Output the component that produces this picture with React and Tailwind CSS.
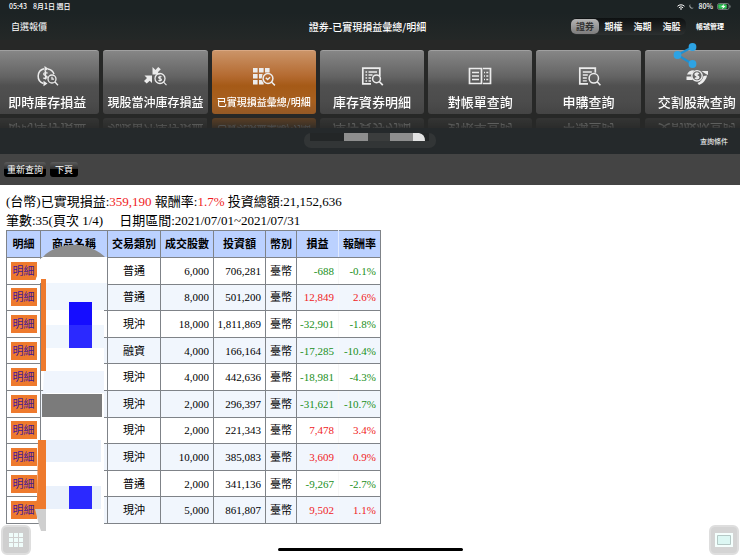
import React, { useState } from "react";
import clsx from "clsx";

const rows = [
  { type: "普通", qty: "6,000", amount: "706,281", pnl: "-688", rate: "-0.1%" },
  { type: "普通", qty: "8,000", amount: "501,200", pnl: "12,849", rate: "2.6%" },
  { type: "現沖", qty: "18,000", amount: "1,811,869", pnl: "-32,901", rate: "-1.8%" },
  { type: "融資", qty: "4,000", amount: "166,164", pnl: "-17,285", rate: "-10.4%" },
  { type: "現沖", qty: "4,000", amount: "442,636", pnl: "-18,981", rate: "-4.3%" },
  { type: "現沖", qty: "2,000", amount: "296,397", pnl: "-31,621", rate: "-10.7%" },
  { type: "現沖", qty: "2,000", amount: "221,343", pnl: "7,478", rate: "3.4%" },
  { type: "現沖", qty: "10,000", amount: "385,083", pnl: "3,609", rate: "0.9%" },
  { type: "普通", qty: "2,000", amount: "341,136", pnl: "-9,267", rate: "-2.7%" },
  { type: "現沖", qty: "5,000", amount: "861,807", pnl: "9,502", rate: "1.1%" },
];

const headers = ["明細", "商品名稱", "交易類別", "成交股數", "投資額", "幣別", "損益", "報酬率"];
const markets = ["證券", "期權", "海期", "海股"];

const iconProps = {
  viewBox: "0 0 24 22",
  fill: "none",
  stroke: "#ececec",
  strokeWidth: 1.5,
  className: "h-[22px] w-6",
  "aria-hidden": true,
};

function InventoryIcon() {
  return (
    <svg {...iconProps}>
      <path d="M9 3.700A7.700 7.700 0 0 0 8.500 18.500M13 4a7.600 7.600 0 0 1 6 5" />
      <path d="M9.500 1 13.500 3.800 9.500 6.500zM8.500 15.800l4 2.800-4 2.700z" fill="#ececec" stroke="none" />
      <path d="M12.500 8.300c-.8-1-3.800-.9-3.800.8 0 1.800 3.500 1.200 3.500 3 0 1.600-2.700 1.700-3.800.6M10.500 6v8.500" strokeWidth="1.300" />
      <circle cx="17" cy="14" r="4" strokeWidth="1.300" />
      <path d="M17 11.800V14.200h2M20 17l3 3.200" strokeWidth="1.300" />
    </svg>
  );
}

function DayTradeIcon() {
  return (
    <svg {...iconProps}>
      <path d="M9.500 2v7.500h7.500L14.800 7.200l3-3L15.200 2l-2.700 3z" fill="#ececec" stroke="none" />
      <path d="M1.500 10.500h7.500v7.500l-2.300-2.200-3 2.600L1 16l3-3z" fill="#ececec" stroke="none" />
      <circle cx="17" cy="13.500" r="5" strokeWidth="1.300" />
      <path d="M18.500 12c-.6-.8-2.900-.8-2.900.5s2.900.9 2.900 2.200-2.300 1.300-3 .4M17 10.700v5.800M20.600 17.200l2.900 2.900" strokeWidth="1.100" />
    </svg>
  );
}

function SummaryIcon() {
  return (
    <svg {...iconProps}>
      <path
        d="M1 3h4.600v4.600H1zM7 3h4.600v4.600H7zM13 3h4.600v4.600H13zM1 9h4.600v4.600H1zM7 9h3.600l-1 4.600H7zM1 15h4.600v4.600H1zM7 15h2.600l2 3v1.600H7z"
        fill="#ececec"
        stroke="none"
      />
      <circle cx="16" cy="13.500" r="4.900" />
      <path d="m13.800 12.800 1.800 1.700 2.500-2.300M19.500 17l3.400 3.400" />
    </svg>
  );
}

function HoldingsIcon() {
  return (
    <svg {...iconProps}>
      <path d="M11 18.800H2.800V3.200h17v8" strokeWidth="1.700" />
      <path d="M5.500 7h1.600M5.500 10h1.600M5.500 13h1.600M5.500 16h1.600M8.500 7h8.500M8.500 10h4M8.500 13h2.500M8.500 16h2.500" strokeWidth="1.300" />
      <circle cx="16.500" cy="13.800" r="3.900" />
      <path d="m19.200 16.500 3.600 3.700" strokeWidth="1.700" />
    </svg>
  );
}

function StatementIcon() {
  return (
    <svg {...iconProps}>
      <path d="M1.500 3.500h12v15h-12zM15 3.500h7.500v15H15" strokeWidth="1.700" />
      <path d="M4 7.500h7M4 11h7M4 14.500h7M16 7.500h1M16 11h1M16 14.500h1M18.300 7.500h2M18.300 11h2M18.300 14.500h2" strokeWidth="1.400" />
    </svg>
  );
}

function SubscribeIcon() {
  return (
    <svg {...iconProps}>
      <path d="M11 18.800H2.800V3.200h15.500v4.500" strokeWidth="1.700" />
      <path d="M5.800 7h9M5.800 10h5M5.800 13h4M5.800 15.800h4" strokeWidth="1.300" />
      <circle cx="16.800" cy="13.300" r="4.700" />
      <path d="m20.200 16.800 3.200 3.400" />
    </svg>
  );
}

function SettlementIcon() {
  return (
    <svg {...iconProps}>
      <path
        d="M2 9.500c1-3 4-4.500 7-4.300L6.800 9.500zM16.500 6H23v4l-2.500-1.200zM1.500 11.500h4.800l1.500 3.500H1.500zM18.500 11l3.500-.5c-.5 4-4 8-8 9.500l-1.500-2c3-1 5.500-4 6-7z"
        fill="#ececec"
        stroke="none"
      />
      <circle cx="12" cy="10.800" r="5.200" strokeWidth="1.400" />
      <path d="M13.800 9c-.8-1.200-3.700-1-3.700.5s3.700 1.100 3.700 2.800-2.900 1.600-3.800.4M12 7.200v7.400" strokeWidth="1.500" />
    </svg>
  );
}

const menu = [
  { label: "即時庫存損益", Icon: InventoryIcon, size: "text-[13px]" },
  { label: "現股當沖庫存損益", Icon: DayTradeIcon, size: "text-xs" },
  { label: "已實現損益彙總/明細", Icon: SummaryIcon, size: "text-[10px]" },
  { label: "庫存資券明細", Icon: HoldingsIcon, size: "text-[13px]" },
  { label: "對帳單查詢", Icon: StatementIcon, size: "text-[13px]" },
  { label: "申購查詢", Icon: SubscribeIcon, size: "text-[13px]" },
  { label: "交割股款查詢", Icon: SettlementIcon, size: "text-[13px]" },
];

function StatusBar() {
  return (
    <div className="flex h-[13px] items-center justify-between px-[9px] text-[7px] font-medium">
      <div className="flex gap-1.5">
        <span>05:43</span>
        <span>8月1日 週日</span>
      </div>
      <div className="flex items-center gap-1">
        <svg viewBox="0 0 16 12" className="h-1.5 w-2" fill="none" stroke="#fff" strokeWidth="2" aria-hidden="true">
          <path d="M1 4.500a10 10 0 0 1 14 0M3.800 7.500a6 6 0 0 1 8.400 0" />
          <path d="m8 12-2.300-2.600a3.300 3.300 0 0 1 4.600 0z" fill="#fff" stroke="none" />
        </svg>
        <svg viewBox="0 0 10 10" className="size-[5px]" fill="#9aa0a0" aria-hidden="true">
          <path d="M3 0a5.500 5.500 0 0 0 6.500 7.500A5 5 0 1 1 3 0z" />
        </svg>
        <span>80%</span>
        <svg viewBox="0 0 28 14" className="h-[7px] w-3.5" aria-hidden="true">
          <rect x="1" y="1" width="23" height="12" rx="3.500" fill="none" stroke="#8a9290" strokeWidth="1.500" />
          <rect x="2.500" y="2.500" width="17" height="9" rx="2" fill="#34c759" />
          <path d="M15 1 8 8h4l-2 5 7-7h-4z" fill="#fff" />
          <path d="M26 5v4" stroke="#8a9290" strokeWidth="2" />
        </svg>
      </div>
    </div>
  );
}

function MenuCard({ label, Icon, size, active, onClick }) {
  return (
    <button
      type="button"
      onClick={onClick}
      className={clsx(
        "flex h-16 flex-col items-center gap-1.5 rounded-[3px] border-t pt-3.5 whitespace-nowrap text-white",
        "[-webkit-box-reflect:below_4px_linear-gradient(transparent_80%,rgba(0,0,0,0.45))]",
        active
          ? "border-[#d9a883] bg-[linear-gradient(#cb9468,#b46a30_40%,#a55a17_55%,#a8601f_80%,#955926)]"
          : "border-[#a0a0a0] bg-[linear-gradient(#868686,#646464_40%,#505050_55%,#4c4c4c_80%,#444444)]"
      )}
    >
      <Icon />
      <span className={clsx("leading-[18px] font-medium", size)}>{label}</span>
    </button>
  );
}

function ShareBadge() {
  return (
    <svg viewBox="0 0 24 26" className="absolute top-[3px] right-[43px] h-[26px] w-6" fill="#2da3e4" aria-hidden="true">
      <path d="M19.500 4 4.500 12l15 9" fill="none" stroke="#1f8fd0" strokeWidth="2.200" />
      <circle cx="19.500" cy="4" r="3.900" />
      <circle cx="4.500" cy="12" r="3.900" />
      <circle cx="19.500" cy="21" r="3.900" />
    </svg>
  );
}

// painted blocks that hide the product names
function NameMask() {
  return (
    <svg viewBox="0 0 74 290" className="pointer-events-none absolute top-3.5 left-7 h-[290px] w-[74px]" aria-hidden="true">
      <path d="M9 13C14 7 22 4 27 2.500 36 0 46 0 52 2.500 60 5 66 8 71 13z" fill="#8c8c8c" />
      <path d="M9 13h64v26h-3v248H12V39H3q-3-4 1-8-2-7 0-12 2-5 5-6z" fill="#fff" />
      <path d="M7 35h5v92H7z" fill="#ee7a2d" />
      <path d="M12 39h61v27H12zM12 81h58v23H12z" fill="#f0f6fd" />
      <path d="M10 127h60v22H9z" fill="#f0f5fd" />
      <path d="M8 150h60v23H8z" fill="#7b7b7b" />
      <path d="M7 173h61v23H7z" fill="#fff" />
      <path d="M12 196h55v22H12zM12 242h55v23H12z" fill="#eaf1fb" />
      <path d="M4 196h8v69H0l3-10z" fill="#ee7a2d" />
      <path d="M1 265h11v22H7l-2-6z" fill="#cfcfcf" />
      <path d="M35 58h23v23H35z" fill="#150dff" />
      <path d="M35 81h23v23H35zM35 242h23v23H35z" fill="#2b29ff" />
    </svg>
  );
}

function ResultTable() {
  return (
    <table className="h-[294px] w-[374px] table-fixed border-collapse text-[11px] leading-4">
      <colgroup>
        <col className="w-[34px]" />
        <col className="w-[67px]" />
        <col className="w-[53px]" />
        <col className="w-[53px]" />
        <col className="w-[52px]" />
        <col className="w-[31px]" />
        <col className="w-[42px]" />
        <col className="w-[42px]" />
      </colgroup>
      <thead>
        <tr className="h-[27px] bg-[#bbd1ff]">
          {headers.map((h) => (
            <th
              key={h}
              className={clsx(
                "border border-[#7f8388] p-0 font-bold whitespace-nowrap",
                h === "損益" && "border-r-[#dfe9ff]",
                h === "報酬率" && "border-l-[#dfe9ff]"
              )}
            >
              {h}
            </th>
          ))}
        </tr>
      </thead>
      <tbody>
        {rows.map((r, i) => {
          const color = r.pnl.startsWith("-") ? "text-[#1a8f1a]" : "text-[#f01c24]";
          return (
            <tr key={i} className="even:bg-[#f1f6fd]">
              <td className="border border-[#7f8388] bg-white p-0 text-center">
                <a href="#detail" className="inline-block bg-[#ee7a2d] px-0.5 leading-[18px] text-[#431795]">
                  明細
                </a>
              </td>
              <td className="border border-[#7f8388] p-0"></td>
              <td className="border border-[#7f8388] p-0 text-center">{r.type}</td>
              <td className="border border-[#7f8388] p-0 pr-1 text-right">{r.qty}</td>
              <td className="border border-[#7f8388] p-0 pr-1 text-right">{r.amount}</td>
              <td className="border border-[#7f8388] p-0 text-center">臺幣</td>
              <td className={clsx("border border-[#7f8388] border-r-[#f7f7f7] p-0 pr-1 text-right", color)}>{r.pnl}</td>
              <td className={clsx("border border-[#7f8388] border-l-[#f7f7f7] p-0 pr-1 text-right", color)}>{r.rate}</td>
            </tr>
          );
        })}
      </tbody>
    </table>
  );
}

export default function App() {
  const [market, setMarket] = useState("證券");
  const [page, setPage] = useState("已實現損益彙總/明細");

  return (
    <div className="min-h-screen overflow-x-hidden bg-white font-['Noto_Sans_CJK_TC',sans-serif] text-black">
      <header className="bg-[#1c2324] text-white">
        <StatusBar />
        <div className="grid h-[27px] grid-cols-[1fr_auto_1fr] items-center bg-linear-to-b from-[#1c2324] to-[#242827] pr-4 pl-[11px]">
          <a href="#quotes" className="text-[9px]">自選報價</a>
          <h1 className="text-[10px] font-medium">證券-已實現損益彙總/明細</h1>
          <div className="flex items-center justify-end gap-2.5">
            <div className="flex h-[17px] items-center rounded-md bg-linear-to-b from-[#0e1112] to-[#2c3030]">
              {markets.map((m) => (
                <button
                  key={m}
                  type="button"
                  onClick={() => setMarket(m)}
                  className={clsx(
                    "h-[15px] rounded-[5px] text-[9px] leading-[15px] font-bold",
                    m === market ? "w-7 bg-linear-to-b from-[#b5b5b5] to-[#7c7c7c] text-[#333]" : "w-[29px] text-[#eee]"
                  )}
                >
                  {m}
                </button>
              ))}
            </div>
            <button type="button" className="text-[7px] font-bold">帳號管理</button>
          </div>
        </div>
      </header>

      <nav className="relative h-[88px] overflow-hidden bg-[#272827] pt-2.5">
        <div className="-mr-[9px] -ml-[5px] grid grid-cols-7 gap-1">
          {menu.map((item) => (
            <MenuCard key={item.label} {...item} active={item.label === page} onClick={() => setPage(item.label)} />
          ))}
        </div>
        <ShareBadge />
      </nav>

      <div className="grid h-[26px] grid-cols-[1fr_auto_1fr] items-center bg-[#25292b] px-3 text-white">
        <span></span>
        <svg viewBox="0 0 134 18" className="h-[18px] w-[134px]" aria-hidden="true">
          <rect x="1" y="1" width="132" height="15" rx="7" fill="#323536" />
          <path d="M7 1h119v8H7z" fill="#232627" />
          <path d="M41 1h24v8H41z" fill="#8e8e8e" />
          <path d="M65 1h22v8H65z" fill="#3b3d3d" />
          <path d="M87 1h23v8H87z" fill="#8e8e8e" />
          <path d="M110 1h6q6 1 6 8h-12z" fill="#e3e3e3" />
        </svg>
        <button type="button" className="justify-self-end text-[7px]">查詢條件</button>
      </div>

      <div className="flex h-[31px] items-center gap-1 bg-[#444] px-1 text-[9px] text-white">
        <button type="button" className="h-[15px] rounded-[3px] bg-[linear-gradient(#5c5c5c,#2c2c2c_50%,#000_50%)] px-[3px] leading-[15px]">
          重新查詢
        </button>
        <button type="button" className="h-[15px] rounded-[3px] bg-[linear-gradient(#5c5c5c,#2c2c2c_50%,#000_50%)] px-[5px] leading-[15px]">
          下頁
        </button>
      </div>

      <main className="px-1.5 pt-[7px] font-['Liberation_Serif','Noto_Sans_CJK_TC',serif]">
        <div className="text-[13px] leading-[19px]">
          <p>
            (台幣)已實現損益:<span className="text-[#f01c24]">359,190</span> 報酬率:
            <span className="text-[#f01c24]">1.7%</span> 投資總額:21,152,636
          </p>
          <p className="flex gap-4">
            <span>筆數:35(頁次 1/4)</span>
            <span>日期區間:2021/07/01~2021/07/31</span>
          </p>
        </div>
        <div className="relative">
          <ResultTable />
          <NameMask />
        </div>
      </main>

      <button type="button" aria-label="選單" className="fixed bottom-0 left-px flex size-[30px] items-center justify-center rounded-md border-2 border-[#dedede] bg-[#cfcfcf]">
        <svg viewBox="0 0 14 14" className="size-3.5" fill="#effcfa" aria-hidden="true">
          <path d="M0 0h4v4H0zM5 0h4v4H5zM10 0h4v4h-4zM0 5h4v4H0zM5 5h4v4H5zM10 5h4v4h-4zM0 10h4v4H0zM5 10h4v4H5zM10 10h4v4h-4z" />
        </svg>
      </button>
      <button type="button" aria-label="視窗" className="fixed right-px bottom-0 flex size-[30px] items-center justify-center rounded-md border-2 border-[#dedede] bg-[#d4d4d4]">
        <svg viewBox="0 0 18 14" className="h-3.5 w-[18px]" aria-hidden="true">
          <path d="M0 0h18v14H0z" fill="#f4fffd" />
          <path d="M2.500 2.500h13v9h-13z" fill="#dcf7f3" stroke="#b5c9c6" />
        </svg>
      </button>
      <div className="fixed inset-x-0 bottom-1 mx-auto h-[3px] w-1/4 rounded-full bg-black"></div>
    </div>
  );
}
